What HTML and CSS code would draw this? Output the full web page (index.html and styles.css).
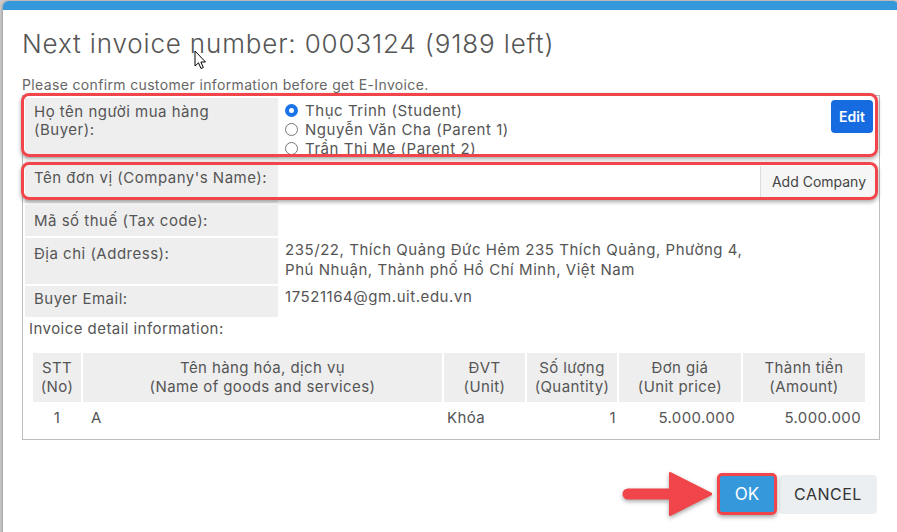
FILE: index.html
```html
<!DOCTYPE html>
<html lang="vi">
<head>
<meta charset="utf-8">
<title>Invoice</title>
<link rel="stylesheet" href="styles.css">
</head>
<body>
<div class="modal">
  <div class="modal-body">
    <h1 class="title">Next invoice number: 0003124 (9189 left)</h1>
    <p class="note">Please confirm customer information before get E-Invoice.</p>
    <div class="info-box">
      <div class="row hl hl-buyer">
        <div class="label label-buyer">Họ tên người mua hàng<br>(Buyer):</div>
        <div class="value value-buyer">
          <div class="radios">
            <div class="radio"><span class="dot checked"></span>Thục Trinh (Student)</div>
            <div class="radio"><span class="dot"></span>Nguyễn Văn Cha (Parent 1)</div>
            <div class="radio"><span class="dot"></span>Trần Thị Mẹ (Parent 2)</div>
          </div>
          <button class="btn-edit">Edit</button>
        </div>
      </div>
      <div class="row hl hl-company">
        <div class="label label-company">Tên đơn vị (Company's Name):</div>
        <div class="value value-company">
          <div class="input"></div>
          <button class="btn-add">Add Company</button>
        </div>
      </div>
      <div class="row">
        <div class="label label-tax">Mã số thuế (Tax code):</div>
        <div class="value"></div>
      </div>
      <div class="row">
        <div class="label label-addr">Địa chỉ (Address):</div>
        <div class="value value-addr">235/22, Thích Quảng Đức Hẻm 235 Thích Quảng, Phường 4,<br>Phú Nhuận, Thành phố Hồ Chí Minh, Việt Nam</div>
      </div>
      <div class="row">
        <div class="label label-email">Buyer Email:</div>
        <div class="value value-email">17521164@gm.uit.edu.vn</div>
      </div>
      <div class="section-title">Invoice detail information:</div>
      <table class="items">
        <thead>
          <tr>
            <th class="c-no">STT<br>(No)</th>
            <th class="c-name">Tên hàng hóa, dịch vụ<br>(Name of goods and services)</th>
            <th class="c-unit">ĐVT<br>(Unit)</th>
            <th class="c-qty">Số lượng<br>(Quantity)</th>
            <th class="c-price">Đơn giá<br>(Unit price)</th>
            <th class="c-amount">Thành tiền<br>(Amount)</th>
          </tr>
        </thead>
        <tbody>
          <tr>
            <td class="t-center">1</td>
            <td class="t-name">A</td>
            <td class="t-unit">Khóa</td>
            <td class="t-right t-qty">1</td>
            <td class="t-right t-price">5.000.000</td>
            <td class="t-right t-amount">5.000.000</td>
          </tr>
        </tbody>
      </table>
    </div>
  </div>
  <div class="footer">
    <svg class="arrow" width="96" height="48" viewBox="0 0 96 48">
      <line x1="12" y1="24" x2="62" y2="24" stroke="#f0454b" stroke-width="11" stroke-linecap="round"/>
      <polygon points="54,3 96,24 54,45" fill="#f0454b" stroke="#f0454b" stroke-width="2" stroke-linejoin="round"/>
    </svg>
    <button class="btn-ok">OK</button>
    <button class="btn-cancel">CANCEL</button>
  </div>
  <svg class="cursor" width="14" height="21" viewBox="0 0 14 21">
    <path d="M1,1 L1,16 L4.5,12.8 L7,18.5 L9.3,17.5 L6.9,12 L11.5,12 Z" fill="#fff" stroke="#000" stroke-width="1" stroke-linejoin="round"/>
  </svg>
</div>
</body>
</html>
```
FILE: styles.css
```css
* { box-sizing: border-box; }
html, body { margin: 0; padding: 0; height: 100%; }
body {
  background: #cdcdcd;
  overflow: hidden;
  font-family: Inter, "Noto Sans", sans-serif;
  color: #555;
}
.modal {
  position: relative;
  margin: 1px 0 0 3px;
  width: 896px;
  height: 560px;
  background: #fff;
  border-top: 9px solid #3498db;
  border-radius: 6px 6px 0 0;
  box-shadow: -1px 0 3px rgba(0,0,0,.25);
}
.modal-body { padding: 18px 0 0 19px; }
.title {
  margin: 0;
  font-size: 26px;
  line-height: 32px;
  font-weight: 300;
  letter-spacing: 0.85px;
  color: #555;
}
.note {
  margin: 17px 0 0;
  font-size: 14px;
  line-height: 16px;
  letter-spacing: 0.35px;
  color: #666;
}
.info-box {
  margin-top: 2px;
  width: 858px;
  border: 1px solid #bdbdbd;
  padding: 2px 2px 6px;
  display: flex;
  flex-direction: column;
  gap: 2px;
}
.row {
  display: grid;
  grid-template-columns: 253px 1fr;
  gap: 2px;
  position: relative;
}
.label {
  background: #eee;
  padding: 9px 9px 5px;
  font-size: 15px;
  line-height: 18px;
  letter-spacing: 0.5px;
}
.value {
  font-size: 15px;
  line-height: 20px;
  letter-spacing: 0.55px;
  padding: 3px 5px;
}
.hl::after {
  content: "";
  position: absolute;
  left: -4px;
  right: -1px;
  border: 3px solid #f0454b;
  border-radius: 8px;
  box-shadow: 0 2px 4px rgba(0,0,0,.35);
  pointer-events: none;
}
.hl-buyer::after { top: -5px; bottom: 1px; }
.hl-company::after { top: 2px; bottom: 3px; }

.label-buyer { padding-top: 5px; }
.value-buyer {
  display: flex;
  justify-content: space-between;
  align-items: flex-start;
  padding: 3px 4px 0 5px;
}
.radio {
  display: flex;
  align-items: center;
  line-height: 19px;
  font-size: 15px;
}
.dot {
  width: 13px;
  height: 13px;
  border-radius: 50%;
  border: 1px solid #767676;
  background: #fff;
  margin-right: 7px;
  flex: none;
}
.dot.checked {
  border: 4px solid #1a73e8;
  background: #fff;
}
.btn-edit {
  margin-top: -1px;
  width: 42px;
  height: 33px;
  border: none;
  border-radius: 4px;
  background: #176be0;
  color: #fff;
  font-family: inherit;
  font-size: 14px;
  font-weight: 600;
  padding: 0;
}
.value-company {
  display: flex;
  padding: 6px 0 6px;
}
.input { flex: 1; }
.btn-add {
  width: 117px;
  height: 31px;
  border: none;
  border-left: 1px solid #ddd;
  background: #f6f6f6;
  color: #444;
  font-family: inherit;
  font-size: 14px;
  padding: 0;
}
.label-tax { padding-top: 7px; padding-bottom: 6px; }
.label-addr { padding-top: 7px; }
.value-addr { padding-top: 2px; padding-bottom: 4px; }
.label-email { padding-top: 4px; padding-bottom: 9px; }
.value-email { padding-top: 1px; }

.section-title {
  padding: 1px 4px 0;
  font-size: 15px;
  line-height: 18px;
  letter-spacing: 0.45px;
}
.items {
  margin: 11px 0 0 6px;
  width: 836px;
  table-layout: fixed;
  border-collapse: separate;
  border-spacing: 2px;
  font-size: 15px;
  line-height: 19px;
  letter-spacing: 0.4px;
  color: #555;
}
.items th {
  background: #eee;
  font-weight: 400;
  padding: 5px 2px 6px;
  text-align: center;
}
.c-no { width: 48px; }
.c-name { width: 359px; }
.c-unit { width: 81px; }
.c-qty { width: 90px; }
.c-price { width: 122px; }
.c-amount { width: 122px; }
.items td { padding: 4px 4px; }
.t-center { text-align: center; }
.t-name { padding-left: 8px !important; }
.t-unit { padding-left: 3px !important; }
.t-right { text-align: right; }
.t-qty { padding-right: 1px !important; }
.t-price { padding-right: 6px !important; }
.t-amount { padding-right: 4px !important; }

.footer {
  display: flex;
  justify-content: flex-end;
  align-items: center;
  margin-top: 30px;
  padding-right: 22px;
}
.arrow {
  margin-right: 6px;
  filter: drop-shadow(0 2px 2px rgba(0,0,0,.35));
}
.btn-ok {
  position: relative;
  width: 58px;
  height: 40px;
  border: none;
  border-radius: 4px;
  background: #3498db;
  color: #fff;
  font-family: inherit;
  font-size: 17px;
  padding: 0;
  margin-right: 3px;
}
.btn-ok::after {
  content: "";
  position: absolute;
  inset: -1px;
  border: 3px solid #f0454b;
  border-radius: 5px;
  box-shadow: 0 2px 4px rgba(0,0,0,.35);
}
.btn-cancel {
  width: 98px;
  height: 39px;
  border: none;
  border-radius: 4px;
  background: #eceff1;
  color: #333;
  font-family: inherit;
  font-size: 16px;
  letter-spacing: 0.5px;
  padding: 0;
}
.cursor {
  position: absolute;
  left: 191px;
  top: 40px;
}
```
